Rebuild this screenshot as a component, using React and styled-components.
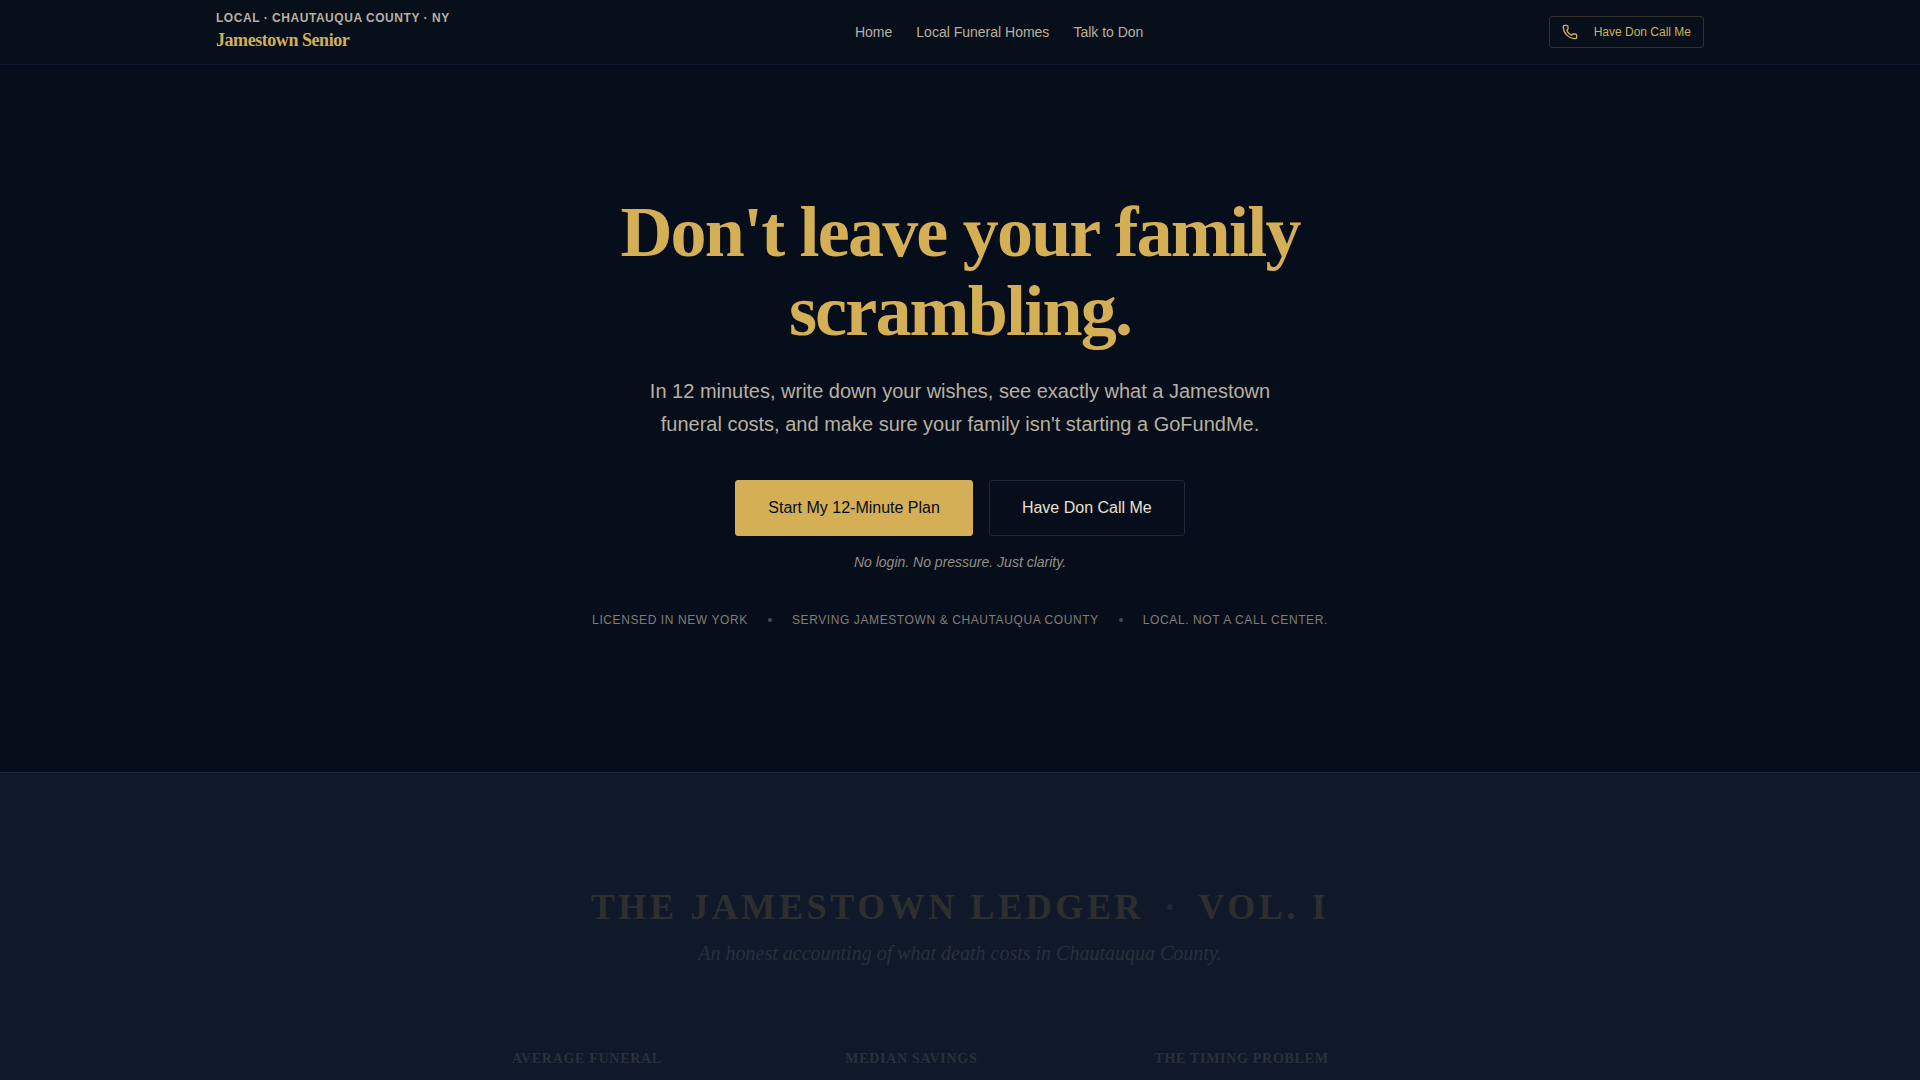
import styled, { createGlobalStyle } from 'styled-components';
import { Phone } from 'lucide-react';

const sans = '"Liberation Sans", Arial, sans-serif';
const serif = '"Liberation Serif", "Times New Roman", serif';

const GlobalStyle = createGlobalStyle`
  * {
    box-sizing: border-box;
  }
  body {
    margin: 0;
    background: #070e1b;
    color: #e8e0d0;
    font-family: ${sans};
  }
  h1, h2, p, ul {
    margin: 0;
    padding: 0;
  }
`

const Page = styled.div`
  min-height: 100vh;
  display: flex;
  flex-direction: column;
`

const Header = styled.header`
  background: #070f1b;
  border-bottom: 1px solid #0d192c;
`

const HeaderInner = styled.div`
  max-width: 1536px;
  height: 64px;
  margin: 0 auto;
  padding: 0 24px;
  display: flex;
  align-items: center;
  justify-content: space-between;
`

const Brand = styled.a`
  display: flex;
  flex-direction: column;
  text-decoration: none;
`

const BrandPlace = styled.span`
  color: #b8b0a0;
  font-size: 12px;
  line-height: 16px;
  font-weight: 700;
  letter-spacing: 0.045em;
  text-transform: uppercase;
`

const BrandName = styled.span`
  color: #d4af55;
  font-family: ${serif};
  font-size: 18px;
  line-height: 28px;
  font-weight: 700;
  letter-spacing: -0.025em;
`

const Nav = styled.nav`
  display: flex;
  gap: 24px;
`

const NavLink = styled.a`
  color: #b8b0a0;
  font-size: 14px;
  line-height: 20px;
  text-decoration: none;
`

const CallButton = styled.button`
  display: flex;
  align-items: center;
  gap: 16px;
  height: 32px;
  padding: 0 12px;
  background: transparent;
  border: 1px solid #35302a;
  border-radius: 3px;
  color: #d4af55;
  font-family: ${sans};
  font-size: 12px;
  cursor: pointer;
`

const Hero = styled.main`
  display: flex;
  flex-direction: column;
  align-items: center;
  padding: 128px 24px 144px;
  text-align: center;
`

const HeroTitle = styled.h1`
  max-width: 768px;
  color: #d4af55;
  font-family: ${serif};
  font-size: 72px;
  line-height: 79px;
  font-weight: 700;
  letter-spacing: -0.025em;
`

const HeroText = styled.p`
  max-width: 672px;
  margin-top: 24px;
  color: #b8b0a0;
  font-size: 20px;
  line-height: 33px;
`

const Actions = styled.div`
  display: flex;
  flex-wrap: wrap;
  justify-content: center;
  gap: 16px;
  margin-top: 39px;
`

const ActionButton = styled.button`
  height: 56px;
  padding: 0 32px;
  background: ${props => props.$primary ? '#d4af55' : 'transparent'};
  border: 1px solid ${props => props.$primary ? '#d4af55' : '#1f293b'};
  border-radius: 3px;
  color: ${props => props.$primary ? '#060d1a' : '#e8e0d0'};
  font-family: ${sans};
  font-size: 16px;
  cursor: pointer;
`

const Note = styled.p`
  margin-top: 16px;
  color: #958f84;
  font-size: 14px;
  line-height: 20px;
  font-style: italic;
`

const TrustList = styled.ul`
  display: flex;
  flex-wrap: wrap;
  align-items: center;
  justify-content: center;
  gap: 20px;
  margin-top: 40px;
  list-style: none;
  color: #827d74;
  font-size: 12px;
  line-height: 16px;
  letter-spacing: 0.05em;
  text-transform: uppercase;
`

const TrustItem = styled.li`
  display: flex;
  align-items: center;
  gap: 20px;
  & + &::before {
    content: '';
    width: 4px;
    height: 4px;
    border-radius: 50%;
    background: #474a4e;
  }
`

const Ledger = styled.section`
  flex: 1;
  padding: 112px 24px 8px;
  background: #0f1929;
  border-top: 1px solid #1f293b;
`

const LedgerInner = styled.div`
  max-width: 896px;
  margin: 0 auto;
  text-align: center;
  opacity: 0.15;
`

const LedgerTitle = styled.h2`
  color: #d4af55;
  font-family: ${serif};
  font-size: 36px;
  line-height: 45px;
  font-weight: 700;
  letter-spacing: 0.1em;
  text-transform: uppercase;
`

const TitleDot = styled.span`
  margin: 0 7px;
  color: #6a7a94;
`

const LedgerText = styled.p`
  margin-top: 8px;
  color: #b8b0a0;
  font-family: ${serif};
  font-size: 20px;
  line-height: 30px;
  font-style: italic;
`

const LedgerTable = styled.table`
  width: 100%;
  margin-top: 81px;
  border-collapse: collapse;
  table-layout: fixed;
`

const LedgerHead = styled.th`
  width: ${props => props.$width};
  padding: 0;
  color: #b8b0a0;
  font-family: ${serif};
  font-size: 14px;
  line-height: 20px;
  font-weight: 700;
  letter-spacing: 0.05em;
  text-align: left;
  text-transform: uppercase;
`

const links = ['Home', 'Local Funeral Homes', 'Talk to Don'];

const trust = [
  'Licensed in New York',
  'Serving Jamestown & Chautauqua County',
  'Local. Not a call center.'
];

const columns = [
  { label: 'Average Funeral', width: '37.2%' },
  { label: 'Median Savings', width: '34.5%' },
  { label: 'The Timing Problem', width: '28.3%' }
];

function App() {
  return (
    <Page>
      <GlobalStyle />
      <Header>
        <HeaderInner>
          <Brand href="#">
            <BrandPlace>Local · Chautauqua County · NY</BrandPlace>
            <BrandName>Jamestown Senior</BrandName>
          </Brand>
          <Nav>
            {links.map(link => <NavLink href="#" key={link}>{link}</NavLink>)}
          </Nav>
          <CallButton type="button">
            <Phone size={16} aria-hidden="true" />
            Have Don Call Me
          </CallButton>
        </HeaderInner>
      </Header>
      <Hero>
        <HeroTitle>Don't leave your family scrambling.</HeroTitle>
        <HeroText>
          In 12 minutes, write down your wishes, see exactly what a Jamestown
          funeral costs, and make sure your family isn't starting a GoFundMe.
        </HeroText>
        <Actions>
          <ActionButton type="button" $primary>Start My 12-Minute Plan</ActionButton>
          <ActionButton type="button">Have Don Call Me</ActionButton>
        </Actions>
        <Note>No login. No pressure. Just clarity.</Note>
        <TrustList>
          {trust.map(item => <TrustItem key={item}>{item}</TrustItem>)}
        </TrustList>
      </Hero>
      <Ledger>
        <LedgerInner>
          <LedgerTitle>
            The Jamestown Ledger <TitleDot>·</TitleDot> Vol. I
          </LedgerTitle>
          <LedgerText>An honest accounting of what death costs in Chautauqua County.</LedgerText>
          <LedgerTable>
            <thead>
              <tr>
                {columns.map(column => (
                  <LedgerHead scope="col" key={column.label} $width={column.width}>{column.label}</LedgerHead>
                ))}
              </tr>
            </thead>
          </LedgerTable>
        </LedgerInner>
      </Ledger>
    </Page>
  );
}

export default App;
